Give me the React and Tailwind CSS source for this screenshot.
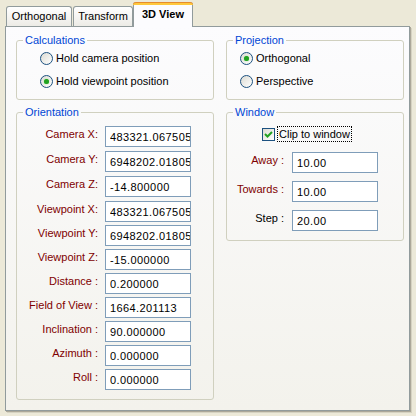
const FONT = { fontFamily: '"Liberation Sans", Arial, sans-serif' };

const ORIENTATION = [
  { label: "Camera X:", value: "483321.067505", mt: "mt-[6px]" },
  { label: "Camera Y:", value: "6948202.018051", mt: "mt-[4px]" },
  { label: "Camera Z:", value: "-14.800000", mt: "mt-[4px]" },
  { label: "Viewpoint X:", value: "483321.067505", mt: "mt-[4px]" },
  { label: "Viewpoint Y:", value: "6948202.018051", mt: "mt-[3px]" },
  { label: "Viewpoint Z:", value: "-15.000000", mt: "mt-[3px]" },
  { label: "Distance :", value: "0.200000", mt: "mt-[3px]" },
  { label: "Field of View :", value: "1664.201113", mt: "mt-[3px]" },
  { label: "Inclination :", value: "90.000000", mt: "mt-[3px]" },
  { label: "Azimuth :", value: "0.000000", mt: "mt-[3px]" },
  { label: "Roll :", value: "0.000000", mt: "mt-[3px]" },
];

const WINDOW_ROWS = [
  { label: "Away :", value: "10.00", mt: "mt-[9px]", color: "text-[#800000]" },
  { label: "Towards :", value: "10.00", mt: "mt-[8px]", color: "text-[#800000]" },
  { label: "Step :", value: "20.00", mt: "mt-[8px]", color: "text-black" },
];

function Radio({ checked, label }) {
  return (
    <div className="flex items-center h-[17px]">
      <span className="w-[13px] h-[13px] rounded-full border border-[#1C5180] bg-gradient-to-br from-[#DCDBD3] to-white flex items-center justify-center shrink-0">
        {checked && (
          <span className="w-[5px] h-[5px] rounded-full bg-[#21A121] shadow-[0_0_1px_#55D751]" />
        )}
      </span>
      <span className="ml-[3px] text-[11px] leading-[13px] text-black">{label}</span>
    </div>
  );
}

function Group({ title, className, children }) {
  return (
    <fieldset className={`border border-[#D0D0BF] rounded-[3px] ${className}`}>
      <legend className="ml-[6px] px-[2px] text-[11px] leading-[13px] text-[#0046D5]">{title}</legend>
      {children}
    </fieldset>
  );
}

function Field({ value }) {
  return (
    <input
      readOnly
      value={value}
      className="w-[86px] h-[21px] border border-[#7F9DB9] bg-white pl-[4px] text-[11px] tracking-[0.4px] text-black outline-none shrink-0"
      style={FONT}
    />
  );
}

function Tab({ label, active, className }) {
  if (active) {
    return (
      <div className={`relative z-10 -mb-px h-[25px] w-[60px] rounded-t-[3px] border-x border-[#919B9C] bg-[#FCFCFE] flex flex-col ${className}`}>
        <div className="h-[3px] rounded-t-[3px] bg-[#FFC83C] border-t border-[#E68B2C] -mx-px" />
        <div className="flex-1 flex items-center justify-center pb-[3px] text-[11px] font-bold text-black">{label}</div>
      </div>
    );
  }
  return (
    <div className={`h-[20px] rounded-t-[3px] border-x border-t border-[#919B9C] bg-gradient-to-b from-white to-[#ECEBE6] flex items-center justify-center text-[11px] text-black ${className}`}>
      {label}
    </div>
  );
}

export default function App() {
  return (
    <div className="w-[416px] h-[416px] bg-[#ECE9D8] pt-[3px] pl-[5px] overflow-hidden" style={FONT}>
      <div className="flex items-end h-[23px]">
        <Tab label="Orthogonal" className="ml-[1px] w-[66px]" />
        <Tab label="Transform" className="ml-[1px] w-[60px]" />
        <Tab label="3D View" active />
      </div>

      <div className="w-[405px] h-[385px] border border-[#919B9C] bg-gradient-to-b from-[#FCFCFE] to-[#F3F2EC] shadow-[1px_1px_0_#ACA899,2px_2px_0_#D6D3C2] pl-[10px] pt-[7px] flex gap-[12px]">
        <div className="flex flex-col w-[198px]">
          <Group title="Calculations" className="h-[66px]">
            <div className="pl-[23px] pt-[3px] flex flex-col gap-[6px]">
              <Radio label="Hold camera position" />
              <Radio label="Hold viewpoint position" checked />
            </div>
          </Group>

          <Group title="Orientation" className="mt-[6px] h-[294px]">
            <div className="flex flex-col">
              {ORIENTATION.map((row) => (
                <div key={row.label} className={`flex items-center h-[21px] ${row.mt}`}>
                  <span className="w-[81px] text-right text-[11px] text-[#800000] leading-[13px] pb-[2px]">{row.label}</span>
                  <span className="ml-[7px]">
                    <Field value={row.value} />
                  </span>
                </div>
              ))}
            </div>
          </Group>
        </div>

        <div className="flex flex-col w-[178px]">
          <Group title="Projection" className="h-[66px]">
            <div className="pl-[13px] pt-[3px] flex flex-col gap-[6px]">
              <Radio label="Orthogonal" checked />
              <Radio label="Perspective" />
            </div>
          </Group>

          <Group title="Window" className="mt-[6px] h-[135px]">
            <div className="flex flex-col">
              <div className="flex items-center h-[16px] mt-[7px] pl-[35px]">
                <span className="w-[13px] h-[13px] border border-[#1C5180] bg-gradient-to-br from-[#DCDBD3] to-white flex items-center justify-center shrink-0">
                  <svg width="11" height="11" viewBox="0 0 11 11">
                    <path d="M2 5 L4.5 7.5 L9 3" fill="none" stroke="#21A121" strokeWidth="2" />
                  </svg>
                </span>
                <span className="ml-[2px] h-[16px] px-[1px] border border-dotted border-black flex items-center text-[11px] text-black leading-[13px]">
                  Clip to window
                </span>
              </div>
              {WINDOW_ROWS.map((row) => (
                <div key={row.label} className={`flex items-center h-[21px] ${row.mt}`}>
                  <span className={`w-[57px] text-right text-[11px] leading-[13px] pb-[2px] ${row.color}`}>{row.label}</span>
                  <span className="ml-[8px]">
                    <Field value={row.value} />
                  </span>
                </div>
              ))}
            </div>
          </Group>
        </div>
      </div>
    </div>
  );
}
